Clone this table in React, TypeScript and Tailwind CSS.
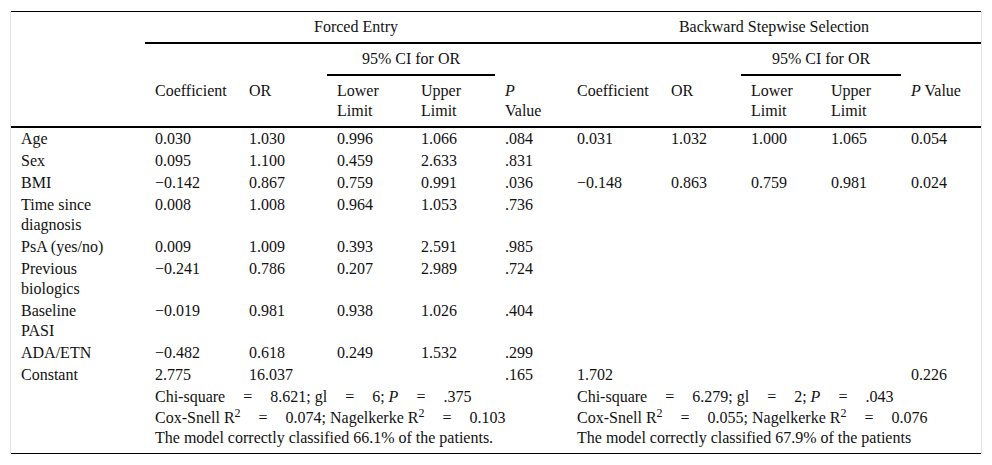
import React from "react";

const MINUS = "\u2212";

type Row = { label: React.ReactNode; cells: string[] };

const rows: Row[] = [
  { label: "Age", cells: ["0.030", "1.030", "0.996", "1.066", ".084", "0.031", "1.032", "1.000", "1.065", "0.054"] },
  { label: "Sex", cells: ["0.095", "1.100", "0.459", "2.633", ".831", "", "", "", "", ""] },
  { label: "BMI", cells: [MINUS + "0.142", "0.867", "0.759", "0.991", ".036", MINUS + "0.148", "0.863", "0.759", "0.981", "0.024"] },
  { label: <>Time since<br />diagnosis</>, cells: ["0.008", "1.008", "0.964", "1.053", ".736", "", "", "", "", ""] },
  { label: "PsA (yes/no)", cells: ["0.009", "1.009", "0.393", "2.591", ".985", "", "", "", "", ""] },
  { label: <>Previous<br />biologics</>, cells: [MINUS + "0.241", "0.786", "0.207", "2.989", ".724", "", "", "", "", ""] },
  { label: <>Baseline<br />PASI</>, cells: [MINUS + "0.019", "0.981", "0.938", "1.026", ".404", "", "", "", "", ""] },
  { label: "ADA/ETN", cells: [MINUS + "0.482", "0.618", "0.249", "1.532", ".299", "", "", "", "", ""] },
  { label: "Constant", cells: ["2.775", "16.037", "", "", ".165", "1.702", "", "", "", "0.226"] },
];

const widths = [134, 94, 88, 84, 84, 72, 94, 80, 80, 80, 80];

function Eq() {
  return <span className="px-[14px]">=</span>;
}

function Stats({ chi, gl, p, cox, nag, pct }: { chi: string; gl: string; p: string; cox: string; nag: string; pct: string }) {
  return (
    <>
      <div className="leading-[20px] whitespace-nowrap">
        Chi-square <Eq /> {chi}; gl <Eq /> {gl}; <i>P</i> <Eq /> {p}
      </div>
      <div className="leading-[21px] whitespace-nowrap">
        Cox-Snell R<sup>2</sup> <Eq /> {cox}; Nagelkerke R<sup>2</sup> <Eq /> {nag}
      </div>
      <div className="leading-[20px] whitespace-nowrap">{pct}</div>
    </>
  );
}

export default function App() {
  const hd = "px-[10px] py-[5px] align-top font-normal leading-[20px]";
  const left = `${hd} text-left`;
  const center = `${hd} text-center`;
  const line2 = "border-b-2 border-black";
  return (
    <div className="bg-white w-[992px] h-[465px] pt-[11px] pl-[10px] [font-family:'Liberation_Serif',serif] text-[16px] text-[#111]">
      <div className="w-[972px] border-x border-[#e3e3e3]">
        <table className="w-[970px] table-fixed border-separate border-spacing-0 border-t border-b border-black">
          <colgroup>
            {widths.map((w, i) => (
              <col key={i} style={{ width: w }} />
            ))}
          </colgroup>
          <thead>
            <tr>
              <th rowSpan={3} className={`${left} ${line2}`}></th>
              <th colSpan={5} className={`${center} ${line2}`}>Forced Entry</th>
              <th colSpan={5} className={`${center} ${line2}`}>Backward Stepwise Selection</th>
            </tr>
            <tr>
              <th className={left}></th>
              <th className={left}></th>
              <th colSpan={2} className={`${center} ${line2}`}>95% CI for OR</th>
              <th className={left}></th>
              <th className={left}></th>
              <th className={left}></th>
              <th colSpan={2} className={`${center} ${line2}`}>95% CI for OR</th>
              <th className={left}></th>
            </tr>
            <tr>
              <th className={`${left} ${line2}`}>Coefficient</th>
              <th className={`${left} ${line2}`}>OR</th>
              <th className={`${left} ${line2}`}>Lower<br />Limit</th>
              <th className={`${left} ${line2}`}>Upper<br />Limit</th>
              <th className={`${left} ${line2}`}><i>P</i><br />Value</th>
              <th className={`${left} ${line2}`}>Coefficient</th>
              <th className={`${left} ${line2}`}>OR</th>
              <th className={`${left} ${line2}`}>Lower<br />Limit</th>
              <th className={`${left} ${line2}`}>Upper<br />Limit</th>
              <th className={`${left} ${line2} whitespace-nowrap`}><i>P</i> Value</th>
            </tr>
          </thead>
          <tbody>
            {rows.map((r, i) => (
              <tr key={i}>
                <td className="px-[10px] py-px align-top leading-[20px] whitespace-nowrap">{r.label}</td>
                {r.cells.map((c, j) => (
                  <td key={j} className="px-[10px] py-px align-top leading-[20px] whitespace-nowrap">{c}</td>
                ))}
              </tr>
            ))}
            <tr>
              <td className="px-[10px] pt-px pb-[5px] align-top"></td>
              <td colSpan={5} className="px-[10px] pt-px pb-[5px] align-top">
                <Stats chi="8.621" gl="6" p=".375" cox="0.074" nag="0.103" pct="The model correctly classified 66.1% of the patients." />
              </td>
              <td colSpan={5} className="px-[10px] pt-px pb-[5px] align-top">
                <Stats chi="6.279" gl="2" p=".043" cox="0.055" nag="0.076" pct="The model correctly classified 67.9% of the patients" />
              </td>
            </tr>
          </tbody>
        </table>
      </div>
    </div>
  );
}
